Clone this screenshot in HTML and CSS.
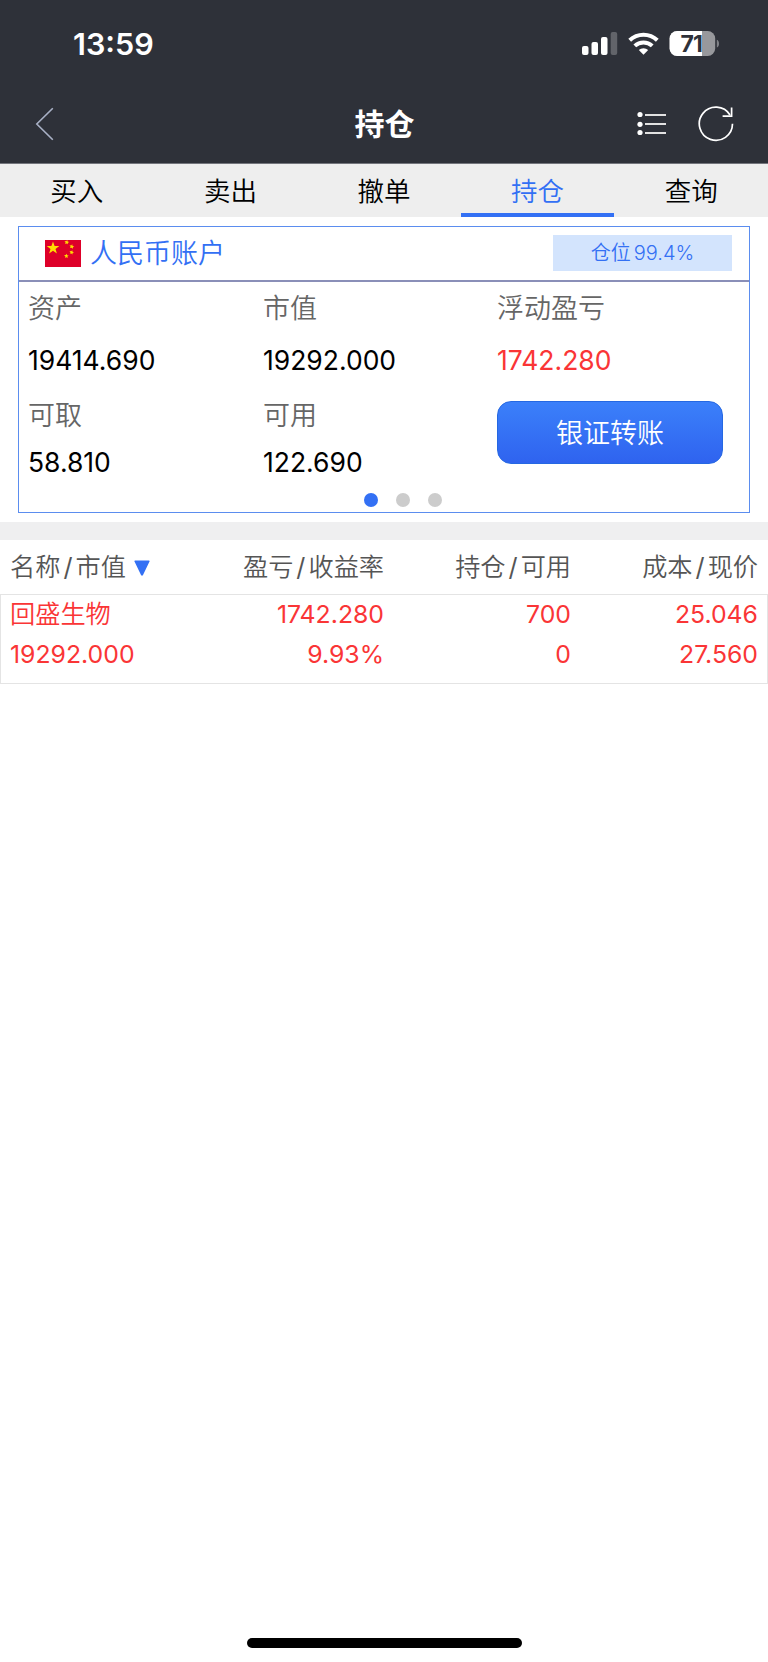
FILE: index.html
```html
<!DOCTYPE html>
<html lang="zh-CN">
<head>
  <meta charset="UTF-8">
  <meta name="viewport" content="width=device-width, initial-scale=1.0">
  <title>持仓</title>
  <link rel="stylesheet" href="styles.css">
</head>
<body>
  <header class="header">
    <div class="status-bar">
      <span class="time">13:59</span>
      <svg class="status-icons" width="140" height="28" viewBox="0 0 140 28">
        <g fill="#fff">
          <rect x="0" y="16" width="6.5" height="9" rx="2"/>
          <rect x="9.5" y="12" width="6.5" height="13" rx="2"/>
          <rect x="19" y="7" width="6.5" height="18" rx="2"/>
          <rect x="28.7" y="2" width="6.5" height="23" rx="2" opacity="0.25"/>
          <path d="M61.5 24.8l-4.7-4.7a6.8 6.8 0 0 1 9.4 0z"/>
        </g>
        <g fill="none" stroke="#fff" stroke-width="4">
          <path d="M47.7 10.3a20 20 0 0 1 27.6 0"/>
          <path d="M52.8 15.9a12.6 12.6 0 0 1 17.4 0"/>
        </g>
        <clipPath id="level"><rect x="87" y="0" width="33" height="28"/></clipPath>
        <rect x="87.6" y="1" width="45.6" height="25" rx="7.5" fill="#97989c"/>
        <rect x="87.6" y="1" width="45.6" height="25" rx="7.5" fill="#fff" clip-path="url(#level)"/>
        <path d="M134.8 9.8c3 1 3 6.8 0 7.8z" fill="#808287"/>
        <text class="battery-text" x="109.2" y="21.5" text-anchor="middle">71</text>
      </svg>
    </div>
    <div class="nav-bar">
      <svg class="back" width="20" height="34" viewBox="0 0 20 34">
        <path d="M17.8 1.2L1.8 17l16 15.8" fill="none" stroke="#a9b1c6" stroke-width="1.6"/>
      </svg>
      <h1>持仓</h1>
      <div class="nav-actions">
        <svg width="30" height="26" viewBox="0 0 30 26">
          <g fill="#fff">
            <circle cx="3" cy="3.5" r="2.6"/>
            <circle cx="3" cy="13.3" r="2.6"/>
            <circle cx="3" cy="21.5" r="2.6"/>
          </g>
          <path d="M8 4h21M8 13h21M8 22h21" stroke="#e2e2e2" stroke-width="2"/>
        </svg>
        <svg width="36" height="36" viewBox="0 0 36 36">
          <g fill="none" stroke="#fff" stroke-width="1.7">
            <path d="M34.5 17.8A16.6 16.6 0 1 1 32 9"/>
            <path d="M33.6 1.5V10.2H24.6"/>
          </g>
        </svg>
      </div>
    </div>
  </header>

  <nav class="tabs">
    <a class="tab">买入</a>
    <a class="tab">卖出</a>
    <a class="tab">撤单</a>
    <a class="tab active">持仓</a>
    <a class="tab">查询</a>
  </nav>

  <section class="account">
    <div class="account-head">
      <svg class="flag" width="36" height="27" viewBox="0 0 36 27">
        <rect width="36" height="27" fill="#de0029"/>
        <g fill="#ffde00">
          <path d="M8 1.5l1.6 4.5h4.7l-3.8 2.9 1.4 4.6L8 10.7l-3.9 2.8 1.4-4.6L1.7 6h4.700z"/>
          <path d="M19.5 1l1.7.2 1-1.2.4 1.6 1.5.3-1.4 1 .2 1.3-1.3-.8-1.5.5.5-1.3z"/>
          <path d="M24.5 5.3l1.7.2 1-1.2.4 1.6 1.7.5-1.4.8v1.5l-1.4-1-1.5.4.6-1.3z"/>
          <path d="M24.5 11l1.7.2 1.1-1 .2 1.5 1.5.6-1.4.7-.2 1.5-1.1-1.1-1.6.2.8-1.2z"/>
          <path d="M19 15.2l1.7-.1.9-1.3.5 1.5 1.6.2-1.3 1 .4 1.5-1.4-.8-1.4.8.5-1.5z"/>
        </g>
      </svg>
      <span class="account-name">人民币账户</span>
      <span class="position-badge">仓位<span class="num">99.4%</span></span>
    </div>
    <div class="account-body">
      <div class="label">资产</div>
      <div class="label">市值</div>
      <div class="label">浮动盈亏</div>
      <div class="value">19414.690</div>
      <div class="value">19292.000</div>
      <div class="value red">1742.280</div>
      <div class="label">可取</div>
      <div class="label">可用</div>
      <button class="transfer">银证转账</button>
      <div class="value">58.810</div>
      <div class="value">122.690</div>
    </div>
    <div class="dots">
      <i class="dot on"></i>
      <i class="dot"></i>
      <i class="dot"></i>
    </div>
  </section>

  <section class="holdings">
    <div class="row head">
      <div>名称<b>/</b>市值<svg class="sort" width="16" height="16" viewBox="0 0 16 16"><path d="M1 .5h14q1 0 .5 1L9 15q-1 1.5-2 0L.5 1.5q-.5-1 .5-1z" fill="#3370f4"/></svg></div>
      <div>盈亏<b>/</b>收益率</div>
      <div>持仓<b>/</b>可用</div>
      <div>成本<b>/</b>现价</div>
    </div>
    <div class="row item">
      <div class="name">回盛生物</div>
      <div>1742.280</div>
      <div>700</div>
      <div>25.046</div>
      <div>19292.000</div>
      <div>9.93%</div>
      <div>0</div>
      <div>27.560</div>
    </div>
  </section>

  <div class="home-bar"></div>
</body>
</html>
```
FILE: styles.css
```css
* {
  box-sizing: border-box;
}

body {
  font-family: Inter, "Noto Sans CJK SC", sans-serif;
  background-color: #fff;
  color: #000;
  margin: 0;
  height: 1662px;
  display: flex;
  flex-direction: column;
}

.header {
  height: 164px;
  background: #2e3139;
  border-bottom: 1px solid #73757c;
  color: #fff;
}

.status-bar {
  display: flex;
  justify-content: space-between;
  height: 88px;
  padding: 0 47px 0 73px;
  align-items: center;
}

.time {
  font-size: 30.5px;
  font-weight: 600;
  padding-bottom: 2px;
}

.status-icons {
  margin-right: -1px;
}

.battery-text {
  font-size: 23px;
  font-weight: 700;
  letter-spacing: -1px;
  fill: #2e3139;
}

.nav-bar {
  display: grid;
  grid-template-columns: 1fr auto 1fr;
  align-items: center;
  height: 72px;
  padding: 0 34px 0 35px;
}

.nav-bar h1 {
  margin: 0;
  font-size: 30px;
  font-weight: 600;
  line-height: 40px;
}

.nav-actions {
  display: flex;
  justify-content: flex-end;
  align-items: center;
  gap: 31px;
}

.tabs {
  display: flex;
  height: 53px;
  background: #eee;
}

.tab {
  flex: 1;
  text-align: center;
  font-size: 26.5px;
  font-weight: 350;
  line-height: 54px;
}

.tab.active {
  color: #3370f4;
  border-bottom: 4px solid #3370f4;
}

.account {
  margin: 9px 18px;
  height: 287px;
  border: 1px solid #5b8def;
}

.account-head {
  display: flex;
  align-items: center;
  height: 55px;
  padding: 0 17px 1px 26px;
  border-bottom: 2px solid #8a8fb8;
  color: #3370f4;
  font-weight: 350;
}

.account-name {
  margin-left: 9px;
  font-size: 27px;
  line-height: 36px;
  padding-top: 1px;
}

.position-badge {
  margin-left: auto;
  width: 179px;
  height: 36px;
  line-height: 36px;
  background: #d3e4fd;
  text-align: center;
  font-size: 20px;
}

.position-badge .num {
  margin-left: 3px;
}

.account-body {
  display: grid;
  grid-template-columns: 235px 234px 226px;
  grid-template-rows: 48px 60px 47px 50px;
  align-items: center;
  padding-left: 9px;
}

.label {
  font-size: 27px;
  font-weight: 350;
  color: #666;
}

.value {
  font-size: 26.5px;
}

.red {
  color: #fa3536;
}

.transfer {
  grid-column: 3;
  grid-row: 3 / 5;
  align-self: start;
  height: 63px;
  margin-top: 11px;
  padding-bottom: 3px;
  border: 1px solid #2568e2;
  border-radius: 14px;
  background: linear-gradient(#3b80fa, #2f63ef);
  color: #fff;
  font-family: inherit;
  font-size: 27px;
  font-weight: 350;
}

.dots {
  display: flex;
  justify-content: center;
  gap: 18px;
  padding: 6px 0 0 37px;
}

.dot {
  width: 14px;
  height: 14px;
  border-radius: 50%;
  background: #ccc;
}

.dot.on {
  background: #3370f4;
}

.holdings {
  border-top: 18px solid #efeff0;
}

.row {
  display: grid;
  grid-template-columns: 197px 187px 187px 187px;
}

.row div {
  text-align: right;
}

.row div:nth-child(4n + 1) {
  padding-left: 10px;
  text-align: left;
}

.head {
  height: 54px;
  line-height: 54px;
  font-size: 25.2px;
  font-weight: 350;
  color: #555;
}

.head b {
  font-weight: 400;
  margin: 0 3px;
}

.sort {
  margin-left: 8px;
}

.item {
  height: 90px;
  grid-auto-rows: 39.5px;
  line-height: 40px;
  font-size: 24.8px;
  color: #fa3536;
  box-shadow: inset 0 0 0 1px #e4e4e4;
}

.item .name {
  font-size: 25.2px;
  font-weight: 350;
}

.home-bar {
  width: 275px;
  height: 10px;
  margin: auto auto 14px;
  border-radius: 5px;
  background: #000;
}
```
